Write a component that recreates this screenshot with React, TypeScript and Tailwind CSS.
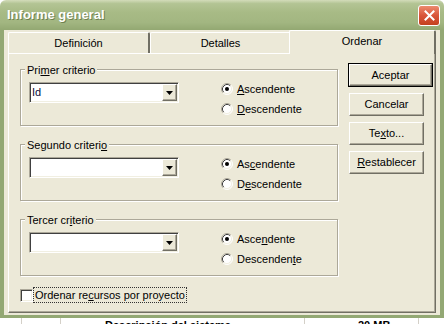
import React from "react";

const raised =
  "border border-t-white border-l-white border-r-[#716F64] border-b-[#716F64] shadow-[inset_-1px_-1px_0_#ACA899]";
const sunken =
  "border border-t-[#ACA899] border-l-[#ACA899] border-r-white border-b-white shadow-[inset_1px_1px_0_#404040,inset_-1px_-1px_0_#F1EFE2]";

function Radio({ checked, children }: { checked?: boolean; children: React.ReactNode }) {
  return (
    <div className="flex h-[20px] items-center">
      <svg width="12" height="12" viewBox="0 0 12 12" className="shrink-0">
        <circle cx="6" cy="6" r="5" fill="white" />
        <path d="M2.11 9.89 A5.5 5.5 0 0 1 9.89 2.11" fill="none" stroke="#ACA899" />
        <path d="M9.89 2.11 A5.5 5.5 0 0 1 2.11 9.89" fill="none" stroke="#FFFFFF" />
        <path d="M2.82 9.18 A4.5 4.5 0 0 1 9.18 2.82" fill="none" stroke="#404040" />
        <path d="M9.18 2.82 A4.5 4.5 0 0 1 2.82 9.18" fill="none" stroke="#F1EFE2" />
        {checked && <circle cx="6" cy="6" r="2" fill="#000" />}
      </svg>
      <span className="ml-[4px]">{children}</span>
    </div>
  );
}

function Combo({ value }: { value?: string }) {
  return (
    <div className={`mt-[12px] ml-[8px] flex h-[21px] w-[150px] items-center bg-white ${sunken}`}>
      <span className="flex-1 pl-[2px] text-[#0a0a3a]">{value}</span>
      <div className={`mr-[1px] flex h-[17px] w-[15px] items-center justify-center bg-[#ECE9D8] ${raised}`}>
        <svg width="7" height="4" viewBox="0 0 7 4">
          <path d="M0 0 H7 L3.5 4 Z" fill="#000" />
        </svg>
      </div>
    </div>
  );
}

function Group({
  label,
  value,
  asc,
  desc,
}: {
  label: React.ReactNode;
  value?: string;
  asc: React.ReactNode;
  desc: React.ReactNode;
}) {
  return (
    <div className="relative flex h-[57px] w-[318px] border border-[#ACA899] shadow-[inset_1px_1px_0_white,1px_1px_0_white]">
      <span className="absolute -top-[6px] left-[4px] bg-[#ECE9D8] px-[2px] leading-[13px]">{label}</span>
      <Combo value={value} />
      <div className="ml-[42px] mt-[9px] flex flex-col">
        <Radio checked>{asc}</Radio>
        <Radio>{desc}</Radio>
      </div>
    </div>
  );
}

function Btn({ children, def }: { children: React.ReactNode; def?: boolean }) {
  if (def) {
    return (
      <div className="h-[24px] w-[85px] border border-black">
        <div className={`flex h-full w-full items-center justify-center ${raised}`}>{children}</div>
      </div>
    );
  }
  return (
    <div className={`ml-[1px] flex h-[23px] w-[75px] items-center justify-center ${raised}`}>{children}</div>
  );
}

const U = ({ children }: { children: React.ReactNode }) => <span className="underline">{children}</span>;

export default function App() {
  return (
    <div className="h-[324px] w-[444px] overflow-hidden bg-white font-['Liberation_Sans',Arial,sans-serif] text-[11px] text-black">
      <div className="flex h-[30px] items-center rounded-t-[6px] bg-[linear-gradient(to_bottom,#D3DCBA_0%,#B3C494_12%,#A8BB86_40%,#A2B681_75%,#93A872_100%)] pl-[7px] pr-[4px]">
        <span className="flex-1 text-[13px] font-bold text-white [text-shadow:1px_1px_0_#6F8250]">Informe general</span>
        <div className="flex h-[21px] w-[22px] items-center justify-center rounded-[3px] border border-white bg-[linear-gradient(to_bottom,#EC8B6E,#D9553A_50%,#C4411F)]">
          <svg width="11" height="11" viewBox="0 0 11 11">
            <path d="M1.5 1.5 L9.5 9.5 M9.5 1.5 L1.5 9.5" stroke="white" strokeWidth="2" strokeLinecap="square" />
          </svg>
        </div>
      </div>

      <div className="h-[288px] border-x-4 border-b-[3px] border-[#93A874] bg-[#ECE9D8] px-[4px]">
        <div className="flex h-[23px] items-end">
          <div className="flex h-[21px] w-[142px] items-center justify-center rounded-t-[2px] border-l border-t border-r-2 border-l-white border-t-white border-r-[#716F64]">
            Definición
          </div>
          <div className="flex h-[21px] w-[141px] items-center justify-center rounded-t-[2px] border-l border-t border-r border-l-white border-t-white border-r-[#716F64]">
            Detalles
          </div>
          <div className="relative z-10 -mb-[1px] -ml-[2px] flex h-[24px] w-[147px] items-center justify-center rounded-t-[2px] border-l border-t border-r-2 border-l-white border-t-white border-r-[#716F64] bg-[#ECE9D8] pb-[2px]">
            Ordenar
          </div>
        </div>

        <div className={`flex h-[260px] ${raised}`}>
          <div className="flex flex-col pl-[11px] pt-[15px]">
            <Group
              label={<>Pri<U>m</U>er criterio</>}
              value="Id"
              asc={<><U>A</U>scendente</>}
              desc={<><U>D</U>escendente</>}
            />
            <div className="mt-[18px]">
              <Group
                label={<>Segundo criteri<U>o</U></>}
                asc={<>As<U>c</U>endente</>}
                desc={<>D<U>e</U>scendente</>}
              />
            </div>
            <div className="mt-[18px]">
              <Group
                label={<>Tercer cr<U>i</U>terio</>}
                asc={<>Asce<U>n</U>dente</>}
                desc={<>Descenden<U>t</U>e</>}
              />
            </div>
            <div className="mt-[11px] flex items-center">
              <div className={`h-[13px] w-[13px] bg-white ${sunken}`} />
              <span className="border border-dotted border-[#333] px-[1px] leading-[14px]">
                Ordenar re<U>c</U>ursos por proyecto
              </span>
            </div>
          </div>

          <div className="ml-[10px] flex flex-col gap-[6px] pt-[9px]">
            <Btn def>Aceptar</Btn>
            <Btn>Cancelar</Btn>
            <Btn>Te<U>x</U>to...</Btn>
            <Btn><U>R</U>establecer</Btn>
          </div>
        </div>
      </div>

      <div className="flex h-[6px] overflow-hidden bg-white font-bold leading-[11px]">
        <div className="w-[22px] border-r border-[#D4D0C8]" />
        <div className="w-[39px] border-r border-[#D4D0C8]" />
        <div className="w-[244px] border-r border-[#D4D0C8] pl-[44px] pt-[2px]">Descripción del sistema</div>
        <div className="w-[114px] border-r border-[#D4D0C8] pl-[53px] pt-[2px]">20 MB</div>
      </div>
    </div>
  );
}
